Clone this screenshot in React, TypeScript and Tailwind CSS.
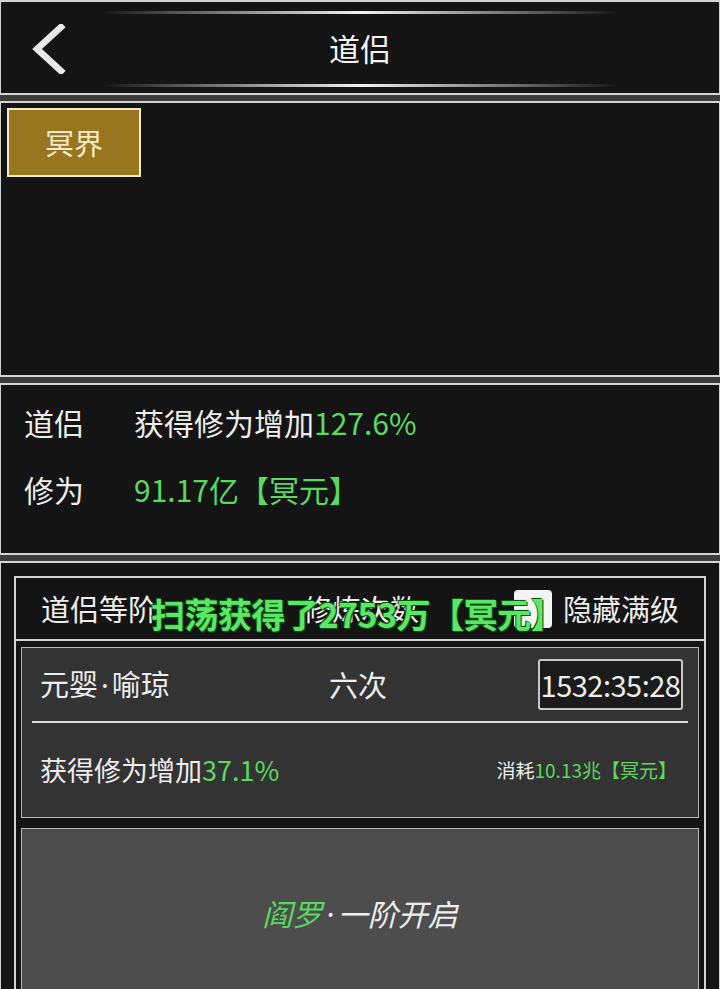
import React from 'react';

const FONT = { fontFamily: '"Noto Sans CJK SC", "Noto Sans", sans-serif' };
const DOT = { fontFamily: '"Noto Sans", sans-serif' };

const Section: React.FC<{ className?: string; children?: React.ReactNode }> = ({ className = '', children }) => (
  <div className={`bg-[#141414] border-x border-y-2 border-[#d4d4d4] ${className}`}>{children}</div>
);

const App: React.FC = () => {
  return (
    <div className="relative w-[720px] h-[989px] overflow-hidden bg-[#3c3c3c] text-[#ededed]" style={FONT}>
      <div className="flex flex-col gap-[6px]">
        {/* Header */}
        <Section className="h-[95px] flex flex-col items-center">
          <div className="mt-[9px] w-[519px] h-[3px] bg-gradient-to-r from-transparent via-[#f2f2f2] to-transparent" />
          <div className="w-full h-[70px] grid grid-cols-[1fr_auto_1fr] items-center">
            <div className="pl-[29px] flex items-center">
              <svg width="36" height="50" viewBox="0 0 36 50">
                <polyline points="31,3 7,25 31,47" fill="none" stroke="#e8e8e8" strokeWidth="6.5" strokeLinecap="square" />
              </svg>
            </div>
            <div className="text-[31px] leading-none text-[#f2f2f2] -mt-[3px]">道侣</div>
            <div />
          </div>
          <div className="w-[519px] h-[3px] bg-gradient-to-r from-transparent via-[#f2f2f2] to-transparent" />
        </Section>

        {/* Tabs */}
        <Section className="h-[276px] pl-[6px] pt-[5px]">
          <button className="w-[134px] h-[69px] bg-[#98751f] border-2 border-[#f3eac7] text-[#f3eac7] text-[29px] flex items-center justify-center">
            冥界
          </button>
        </Section>

        {/* Info */}
        <Section className="h-[172px] pt-[4px] pl-[23px] text-[30px]">
          <div className="h-[67px] flex items-center">
            <span className="w-[110px]">道侣</span>
            <span>获得修为增加<span className="text-[#5ad95f]">127.6%</span></span>
          </div>
          <div className="h-[67px] flex items-center">
            <span className="w-[110px]">修为</span>
            <span className="text-[#5ad95f]">91.17亿【冥元】</span>
          </div>
        </Section>

        {/* Table */}
        <Section className="h-[440px] px-[13px] pt-[13px]">
          <div className="border-x-2 border-t-2 border-[#d4d4d4] h-full">
            <div className="h-[63px] border-b-2 border-[#d4d4d4] flex items-center pl-[25px] text-[29px]">
              <span className="w-[262px]">道侣等阶</span>
              <span className="w-[211px]">修炼次数</span>
              <span className="w-[38px] h-[38px] rounded-[4px] bg-[#f4f4f4] mr-[11px]" />
              <span>隐藏满级</span>
            </div>
            <div className="px-[5px] pt-[6px] flex flex-col gap-[10px]">
              <div className="h-[171px] bg-[#333333] border border-[#b8b8b8] flex flex-col">
                <div className="h-[73px] flex items-center pl-[18px] pr-[15px]">
                  <span className="w-[289px] text-[29px]">
                    元婴<span className="mx-[3px]" style={DOT}>·</span>喻琼
                  </span>
                  <span className="flex-1 text-[29px]">六次</span>
                  <span className="w-[145px] h-[51px] rounded-[3px] bg-[#1b1b1b] border-2 border-[#c8c8c8] flex items-center justify-center text-[29px] tracking-[-0.5px]">
                    1532:35:28
                  </span>
                </div>
                <div className="mx-[10px] h-[2px] bg-[#e0e0e0]" />
                <div className="flex-1 flex items-center justify-between pl-[18px] pr-[21px]">
                  <span className="text-[27px]">获得修为增加<span className="text-[#5ad95f]">37.1%</span></span>
                  <span className="text-[19px]">消耗<span className="text-[#5ad95f]">10.13兆【冥元】</span></span>
                </div>
              </div>
              <div className="h-[200px] bg-[#4d4d4d] border border-[#b8b8b8] flex items-center justify-center text-[30px] italic pb-[29px]">
                <span className="text-[#5ad95f]">阎罗</span>
                <span><span className="mx-[4px]" style={DOT}>·</span>一阶开启</span>
              </div>
            </div>
          </div>
        </Section>
      </div>

      {/* Toast overlay */}
      <div
        className="absolute left-[151px] top-[592px] text-[34px] font-bold text-[#5de666] leading-[44px] whitespace-nowrap tracking-[-0.5px]"
        style={{ textShadow: '0 0 2px #0b5a14, 1px 1px 0 #0b5a14, -1px -1px 0 #0b5a14' }}
      >
        扫荡获得了2753万【冥元】
      </div>
    </div>
  );
};

export default App;
